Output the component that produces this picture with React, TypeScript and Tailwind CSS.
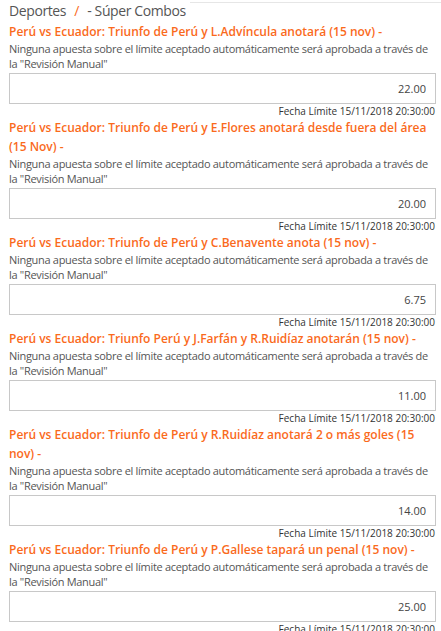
import React from 'react';

type Combo = {
  title: string;
  amount: string;
};

const combos: Combo[] = [
  {title: 'Perú vs Ecuador: Triunfo de Perú y L.Advíncula anotará (15 nov) -', amount: '22.00'},
  {title: 'Perú vs Ecuador: Triunfo de Perú y E.Flores anotará desde fuera del área (15 Nov) -', amount: '20.00'},
  {title: 'Perú vs Ecuador: Triunfo de Perú y C.Benavente anota (15 nov) -', amount: '6.75'},
  {title: 'Perú vs Ecuador: Triunfo Perú y J.Farfán y R.Ruidíaz anotarán (15 nov) -', amount: '11.00'},
  {title: 'Perú vs Ecuador: Triunfo de Perú y R.Ruidíaz anotará 2 o más goles (15 nov) -', amount: '14.00'},
  {title: 'Perú vs Ecuador: Triunfo de Perú y P.Gallese tapará un penal (15 nov) -', amount: '25.00'},
];

const ComboItem = ({combo}: {combo: Combo}) => (
  <div>
    <div className="text-[12px] leading-[19px] font-semibold text-[#fa6a1c]">{combo.title}</div>
    <p className="text-[11px] leading-[15px] tracking-[-0.3px] text-[#555]">
      Ninguna apuesta sobre el límite aceptado automáticamente será aprobada a través de la "Revisión Manual"
    </p>
    <input
      type="text"
      readOnly
      value={combo.amount}
      className="block w-full h-[31px] mt-[2px] border border-[#c8c8c8] px-[9px] text-right text-[11px] text-[#444] bg-white outline-none"
    />
    <div className="text-right text-[10px] leading-[14px] text-[#333] pr-px">Fecha Límite 15/11/2018 20:30:00</div>
  </div>
);

const App = () => {
  return (
    <div className="relative h-[631px] overflow-hidden bg-white font-['Open_Sans',sans-serif]">
      <span className="absolute left-[190px] right-0 top-[2px] h-px bg-[#e6e6e6]" />
      <div className="pl-[9px] pr-[5px]">
        <div className="h-[22px] text-[14px] leading-[22px] tracking-[-0.4px] text-[#555]">
          Deportes <span className="text-[#fa6a1c] mx-[5px]">/</span> - Súper Combos
        </div>
        {combos.map((c, i) => (
          <ComboItem key={i} combo={c} />
        ))}
      </div>
    </div>
  );
};

export default App;
